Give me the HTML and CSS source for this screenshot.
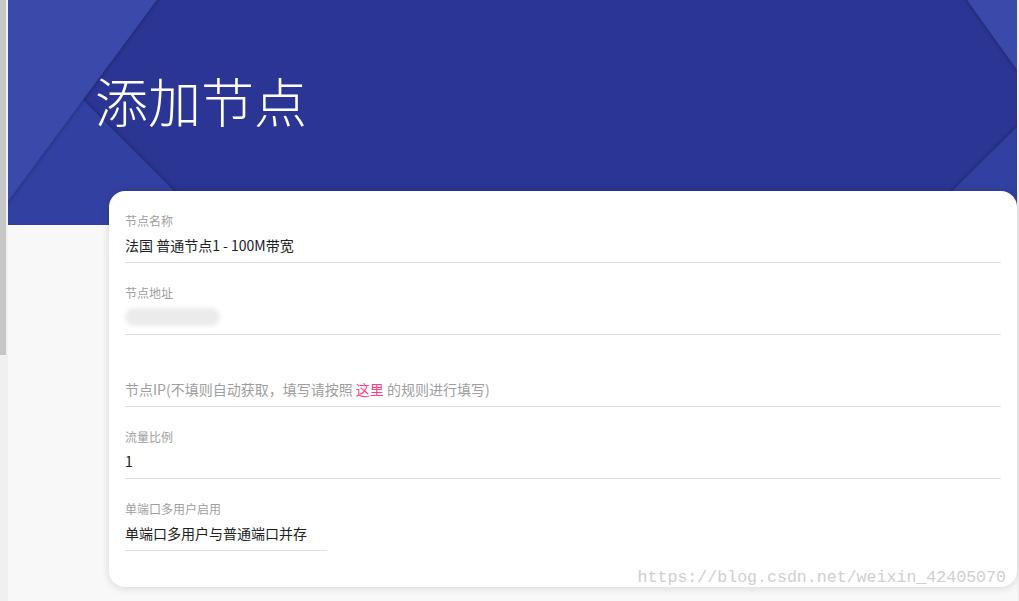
FILE: index.html
```html
<!DOCTYPE html>
<html lang="zh-CN">
<head>
    <meta charset="UTF-8">
    <meta name="viewport" content="width=device-width, initial-scale=1.0">
    <title>添加节点</title>
    <link rel="stylesheet" href="styles.css">
</head>
<body>
    <div class="scroll-track">
        <div class="scroll-thumb"></div>
    </div>

    <div class="page">
        <header class="page-header">
            <!-- angled paper shapes behind the title -->
            <svg class="header-decor" width="1009" height="225">
                <defs>
                    <filter id="paperShadow" x="-20%" y="-20%" width="140%" height="140%">
                        <feDropShadow dx="0" dy="0" stdDeviation="2.5" flood-color="#000" flood-opacity="0.4"/>
                    </filter>
                </defs>
                <polygon points="75,100 200,225 0,225 0,175" fill="#3141a1" filter="url(#paperShadow)"/>
                <polygon points="-10,-10 156,-10 0,201 -10,214" fill="#3a4aaa" filter="url(#paperShadow)"/>
                <polygon points="1020,116 1020,240 895,240" fill="#3141a1" filter="url(#paperShadow)"/>
                <polygon points="952,-10 1030,-10 1030,99" fill="#3a4aaa" filter="url(#paperShadow)"/>
            </svg>
            <h1 class="page-title">添加节点</h1>
        </header>

        <div class="card">
            <div class="field">
                <label class="field-label">节点名称</label>
                <div class="field-value">法国 普通节点1 - 100M带宽</div>
            </div>

            <div class="field">
                <label class="field-label">节点地址</label>
                <div class="field-value"><span class="blurred"></span></div>
            </div>

            <div class="field">
                <label class="field-label"></label>
                <div class="field-value placeholder">节点IP(不填则自动获取，填写请按照 <a href="#" class="link">这里</a> 的规则进行填写)</div>
            </div>

            <div class="field">
                <label class="field-label">流量比例</label>
                <div class="field-value">1</div>
            </div>

            <div class="field field-select">
                <label class="field-label">单端口多用户启用</label>
                <div class="field-value">单端口多用户与普通端口并存</div>
            </div>
        </div>

        <div class="watermark">https://blog.csdn.net/weixin_42405070</div>
    </div>
</body>
</html>
```

FILE: styles.css
```css
html, body {
    margin: 0;
    height: 100%;
}
body {
    display: flex;
    background-color: #f0f0f0;
    font-family: "Noto Sans CJK SC", "Noto Sans", sans-serif;
    overflow: hidden;
}
.scroll-track {
    width: 8px;
    flex-shrink: 0;
    background-color: #f0f0f0;
}
.scroll-thumb {
    width: 6px;
    height: 355px;
    background-color: #c6c6c6;
}
.page {
    position: relative;
    width: 1009px;
    flex-shrink: 0;
    background-color: #f8f8f8;
}
.page-header {
    position: relative;
    height: 225px;
    background-color: #2b3594;
    overflow: hidden;
}
.header-decor {
    position: absolute;
    left: 0;
    top: 0;
}
.page-title {
    position: relative;
    margin: 0;
    padding: 73px 0 0 87px;
    font-family: "Liberation Serif", "Noto Sans CJK SC", serif;
    font-size: 53px;
    font-weight: 300;
    line-height: 64px;
    color: #fff;
}
.card {
    position: relative;
    margin: -34px 0 0 101px;
    padding: 0 16px 36px;
    background-color: #fff;
    border-radius: 16px;
    box-shadow: 0 1px 8px rgba(0, 0, 0, 0.14);
}
.field {
    height: 72px;
    padding-top: 22px;
    box-sizing: border-box;
    border-bottom: 1px solid #e0e0e0;
}
.field-select {
    width: 202px;
}
.field-label {
    display: block;
    height: 16px;
    font-size: 12px;
    line-height: 16px;
    color: #9e9e9e;
}
.field-value {
    margin-top: 6px;
    height: 20px;
    font-size: 14px;
    line-height: 20px;
    color: #212121;
    white-space: nowrap;
}
.placeholder {
    color: #9e9e9e;
}
.link {
    color: #ff4081;
    text-decoration: none;
}
.blurred {
    display: inline-block;
    width: 95px;
    height: 18px;
    margin-top: 1px;
    background-color: #ebebeb;
    border-radius: 9px;
    filter: blur(2px);
    vertical-align: top;
}
.watermark {
    position: absolute;
    right: 11px;
    top: 568px;
    font-family: "Liberation Mono", monospace;
    font-size: 16.6px;
    color: #cfcfcf;
    text-shadow: 0 0 1px #fff;
}
```
